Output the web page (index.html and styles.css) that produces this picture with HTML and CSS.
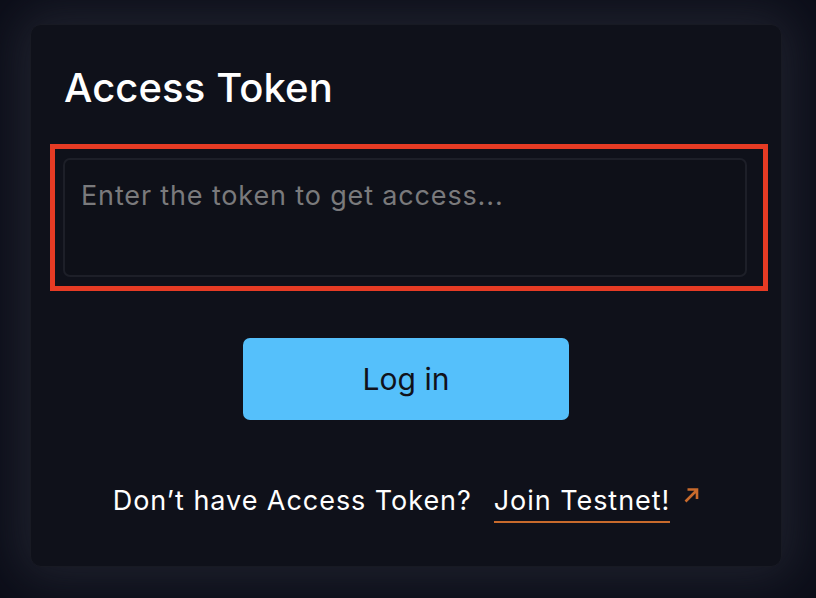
FILE: index.html
```html
<!DOCTYPE html>
<html lang="en">
<head>
<meta charset="utf-8">
<title>Access Token</title>
<link rel="stylesheet" href="styles.css">
</head>
<body>
<main class="card">
  <h1 class="title">Access Token</h1>
  <div class="highlight">
    <textarea class="token" placeholder="Enter the token to get access..."></textarea>
  </div>
  <button class="login" type="button">Log in</button>
  <p class="footer">
    <span class="question">Don’t have Access Token?</span>
    <a class="join" href="#">Join Testnet!</a>
    <svg class="arrow" width="16" height="16" viewBox="0 0 16 16" aria-hidden="true">
      <path d="M2.5 14.5 L14 3 M4.5 2.5 H14 V12" fill="none" stroke="#c86a2c" stroke-width="2.6" stroke-linecap="butt" stroke-linejoin="miter"/>
    </svg>
  </p>
</main>
</body>
</html>
```

FILE: styles.css
```css
html, body {
  margin: 0;
  padding: 0;
}
body {
  width: 816px;
  height: 598px;
  overflow: hidden;
  background: #0b0d18;
  font-family: "Inter", "Noto Sans", sans-serif;
  padding: 24px 34px 0 30px;
  box-sizing: border-box;
}
.card {
  box-sizing: border-box;
  width: 752px;
  height: 543px;
  background: #0f111a;
  border: 1px solid #181a23;
  border-radius: 11px;
  box-shadow: 0 0 50px 14px rgba(38, 40, 52, 0.75);
  padding: 43px 33px 0 33px;
  display: flex;
  flex-direction: column;
}
.title {
  margin: 0;
  font-size: 40px;
  line-height: 40px;
  font-weight: 500;
  letter-spacing: 0.1px;
  color: #ffffff;
}
.highlight {
  margin: 36px -20px 0 -14px;
  border: 5px solid #e63b24;
  padding: 9px 16px 9px 8px;
  display: flex;
}
.token {
  flex: 1;
  height: 119px;
  box-sizing: border-box;
  resize: none;
  background: #0e1018;
  border: 2px solid #1d1f28;
  border-radius: 7px;
  padding: 18px 16px 14px 16px;
  font-family: inherit;
  font-size: 27px;
  line-height: 36px;
  letter-spacing: 0.85px;
  color: #ffffff;
  outline: none;
}
.token::placeholder {
  color: #7a7a7c;
}
.login {
  align-self: center;
  margin-top: 47px;
  width: 326px;
  height: 82px;
  border: none;
  border-radius: 7px;
  background: #55c0fb;
  color: #10121b;
  font-family: inherit;
  font-size: 30px;
  font-weight: 400;
}
.footer {
  margin: 65px 0 0 0;
  display: flex;
  justify-content: center;
  align-items: flex-start;
  font-size: 27px;
  line-height: 32px;
  letter-spacing: 0.95px;
  color: #ffffff;
}
.question {
  margin-right: 22px;
}
.join {
  display: inline-block;
  color: #ffffff;
  text-decoration: none;
  border-bottom: 2px solid #c86a2c;
  padding-bottom: 4px;
}
.arrow {
  margin-left: 13px;
  margin-top: 2px;
}
```
